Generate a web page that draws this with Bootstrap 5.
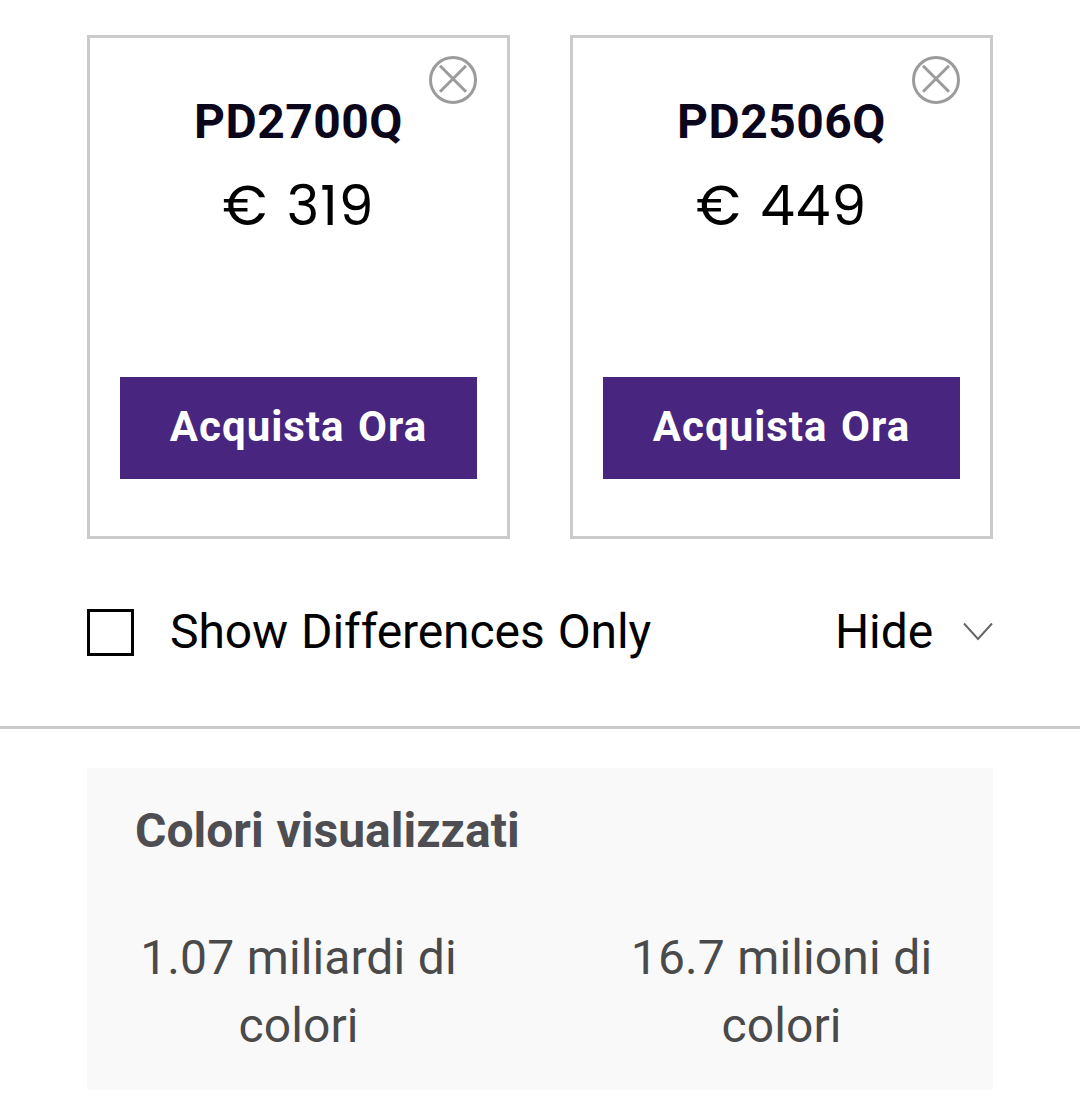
<!DOCTYPE html>
<html lang="it">
<head>
<meta charset="utf-8">
<meta name="viewport" content="width=device-width, initial-scale=1">
<title>Confronta</title>
<link href="https://cdn.jsdelivr.net/npm/bootstrap@5.3.0/dist/css/bootstrap.min.css" rel="stylesheet">
<style>
body{font-family:Roboto,sans-serif;color:#000;background:#fff;width:1080px;height:1117px;overflow:hidden}
.compare-wrap{padding:35px 87px 0}
.product-grid{gap:60px}
.product-box{height:504px;border:3px solid #cbcbcb;padding:0 30px;position:relative}
.remove-btn{position:absolute;top:18px;right:30px;width:48px;height:48px;background:none}
.remove-btn svg,.hide-toggle svg{display:block}
.product-name{font-size:48px;line-height:60px;font-weight:700;color:#0c061c;letter-spacing:.5px;margin-top:54px}
.product-price{font-family:Poppins,Inter,sans-serif;font-size:55px;line-height:70px;letter-spacing:1px;word-spacing:3px;margin-top:19px}
.buy-btn{height:102px;background:#48257f;color:#fff;font-weight:700;font-size:42px;letter-spacing:1px;word-spacing:2px;line-height:100px;margin-top:136px}
.filter-row{height:190px;border-bottom:3px solid #cbcbcb;padding:0 87px;font-size:48px;letter-spacing:-.1px;word-spacing:1.3px}
.diff-label,.hide-label{padding-bottom:2px}
.check-square{width:47px;height:47px;border:3px solid #000;margin-right:36px}
.chevron{margin-left:30px;margin-bottom:2px}
.spec-panel{margin:39px 87px 0;height:322px;background:#f9f9f9;color:#4a4a4a}
.spec-title{font-size:48px;line-height:68px;font-weight:700;color:#4d4d52;padding:29px 48px 0;word-spacing:1px}
.spec-values{gap:60px;margin-top:59px;font-size:48px;line-height:68px;letter-spacing:.1px;word-spacing:.5px}
</style>
</head>
<body>
<main>
<section class="compare-wrap">
<div class="product-grid d-flex">
<article class="product-box flex-fill w-50 text-center">
<button class="remove-btn border-0 p-0" aria-label="Rimuovi"><svg width="48" height="48" fill="none" stroke="#9b9b9b" stroke-width="3"><circle cx="24" cy="24" r="22.5"/><path d="M11 9.8 37 35.8M37 9.8 11 35.8"/></svg></button>
<h2 class="product-name mb-0">PD2700Q</h2>
<div class="product-price">€ 319</div>
<a class="buy-btn btn rounded-0 border-0 p-0 d-block">Acquista Ora</a>
</article>
<article class="product-box flex-fill w-50 text-center">
<button class="remove-btn border-0 p-0" aria-label="Rimuovi"><svg width="48" height="48" fill="none" stroke="#9b9b9b" stroke-width="3"><circle cx="24" cy="24" r="22.5"/><path d="M11 9.8 37 35.8M37 9.8 11 35.8"/></svg></button>
<h2 class="product-name mb-0">PD2506Q</h2>
<div class="product-price">€ 449</div>
<a class="buy-btn btn rounded-0 border-0 p-0 d-block">Acquista Ora</a>
</article>
</div>
</section>
<section class="filter-row d-flex align-items-center justify-content-between">
<div class="d-flex align-items-center"><span class="check-square"></span><span class="diff-label">Show Differences Only</span></div>
<div class="hide-toggle d-flex align-items-center"><span class="hide-label">Hide</span><svg class="chevron" width="30" height="20" fill="none" stroke="#666" stroke-width="2"><path d="M1 1.5 15 17 29 1.5"/></svg></div>
</section>
<section class="spec-panel">
<h3 class="spec-title mb-0">Colori visualizzati</h3>
<div class="spec-values d-flex text-center"><div class="w-50 px-5">1.07 miliardi di colori</div><div class="w-50 px-5">16.7 milioni di colori</div></div>
</section>
</main>
<script src="https://cdn.jsdelivr.net/npm/bootstrap@5.3.0/dist/js/bootstrap.bundle.min.js"></script>
</body>
</html>
